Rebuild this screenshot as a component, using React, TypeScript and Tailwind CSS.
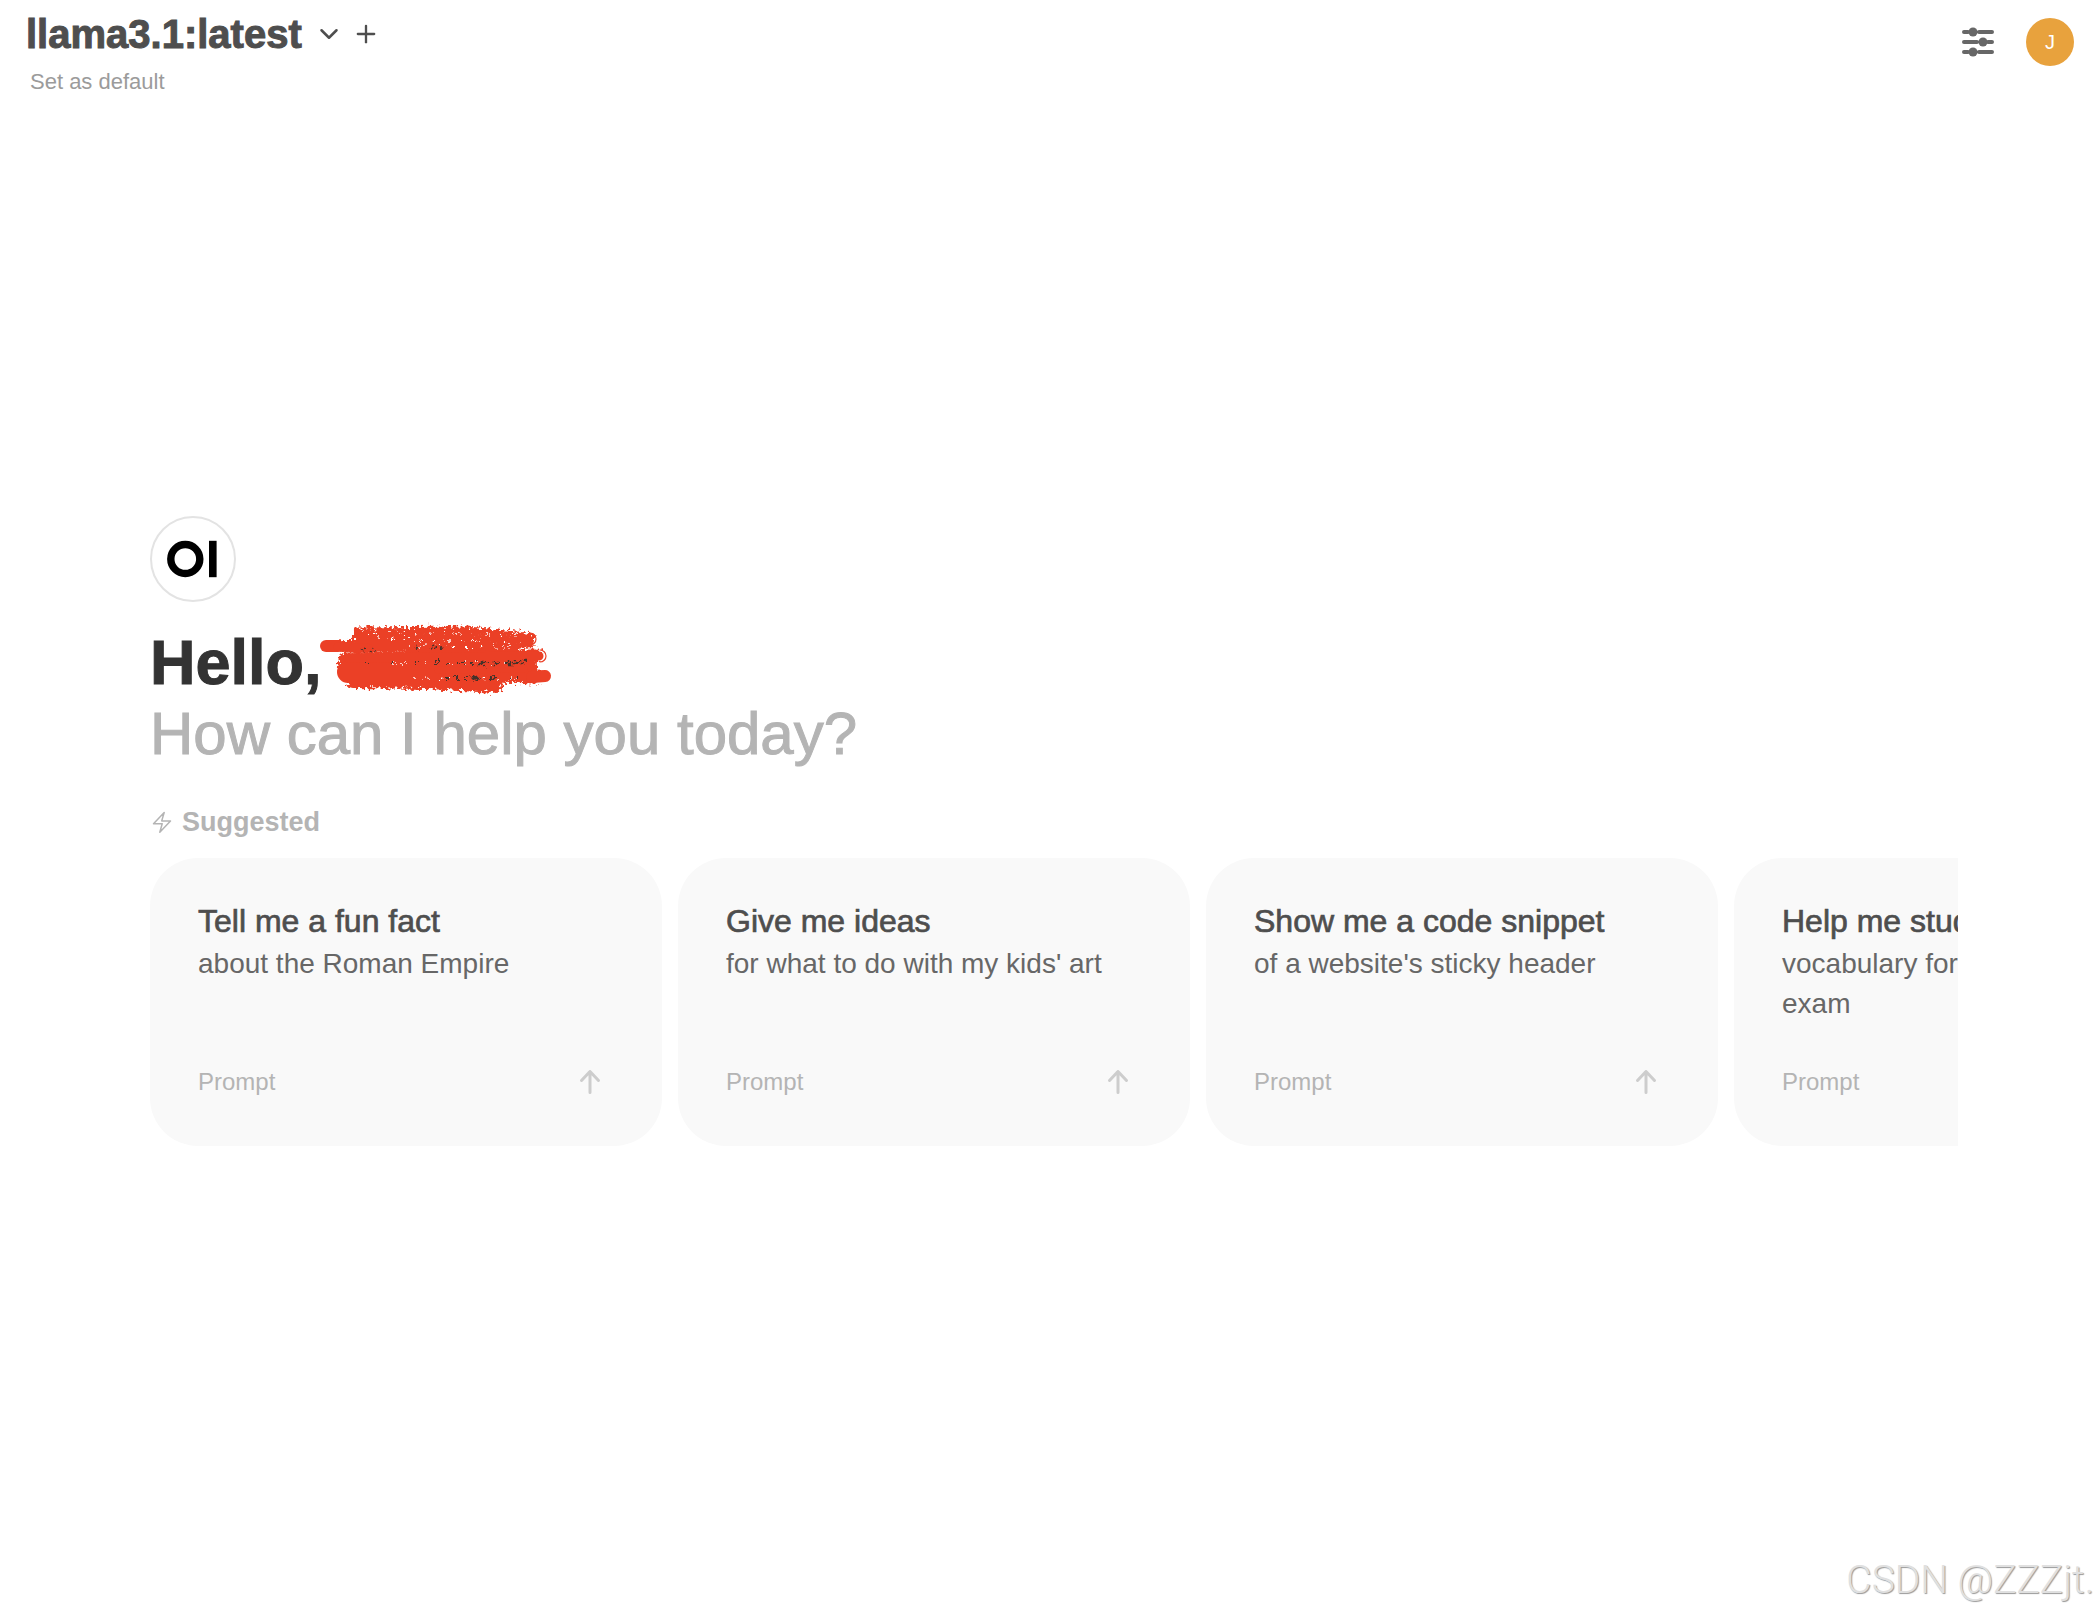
import { ChevronDown, Plus } from "lucide-react";

interface Suggestion {
  title: string;
  description: string;
}

const suggestions: Suggestion[] = [
  { title: "Tell me a fun fact", description: "about the Roman Empire" },
  { title: "Give me ideas", description: "for what to do with my kids' art" },
  { title: "Show me a code snippet", description: "of a website's sticky header" },
  { title: "Help me study", description: "vocabulary for a college entrance exam" },
];

function ControlsIcon() {
  return (
    <svg width="32" height="32" viewBox="0 0 32 32" fill="none" stroke="currentColor" strokeWidth="4" strokeLinecap="round">
      <path d="M2 6h4M17 6h13M2 16h13M26 16h4M2 26h4M17 26h13" />
      <path d="M6 6h11M15 16h11M6 26h11" strokeWidth="2" />
      <g fill="currentColor" stroke="none">
        <circle cx="11" cy="6" r="4.5" />
        <circle cx="21" cy="16" r="4.5" />
        <circle cx="11" cy="26" r="4.5" />
      </g>
    </svg>
  );
}

function Logo() {
  return (
    <div className="h-[86px] w-[86px] rounded-full border-2 border-[#e3e3e3] bg-white">
      <svg width="82" height="82" viewBox="0 0 82 82">
        <circle cx="33.3" cy="41" r="14.5" fill="none" stroke="#000" strokeWidth="7.4" />
        <rect x="57" y="22.8" width="7.6" height="36.4" fill="#000" />
      </svg>
    </div>
  );
}

// Crayon strokes that hide the user's name
function Scribble() {
  return (
    <svg width="234" height="72" viewBox="4 1 234 72" className="block overflow-visible">
      <defs>
        <filter id="crayon" filterUnits="userSpaceOnUse" x="-10" y="-15" width="260" height="105">
          <feTurbulence type="fractalNoise" baseFrequency="0.3" numOctaves="2" seed="4" result="noise" />
          <feDisplacementMap in="SourceGraphic" in2="noise" scale="11" xChannelSelector="R" yChannelSelector="G" />
        </filter>
      </defs>
      <g fill="none" stroke="#eb4026" strokeLinecap="round" strokeLinejoin="round">
        <g filter="url(#crayon)">
          <path d="M36 10 L150 9 L216 16" strokeWidth="15" strokeLinecap="butt" />
          <path d="M25 21 L120 20 L198 20" strokeWidth="12" />
          <path d="M27 34 L120 32 L218 31" strokeWidth="13" />
          <path d="M27 42 L120 43 L212 43" strokeWidth="15" />
          <path d="M32 52 L120 50 L220 52" strokeWidth="13" />
          <path d="M36 57 L110 58 L178 62" strokeWidth="12" />
        </g>
        <path d="M8 21 L20 21" strokeWidth="12" />
        <path d="M20 22 L50 23" strokeWidth="9" />
        <path d="M30 47 L110 47" strokeWidth="22" />
        <path d="M30 33 L221 31" strokeWidth="9" />
        <path d="M120 45 L206 44" strokeWidth="7" />
        <path d="M214 52 L227 51" strokeWidth="12" />
        <path d="M222 25a6 6 0 0 1 0 12" strokeWidth="1.2" />
        <path d="M212 8a6 6 0 0 1 0 12" strokeWidth="1.2" />
      </g>
      <g filter="url(#crayon)" fill="none" stroke="#fff" strokeWidth="1.3" strokeDasharray="2 7 1 4 3 11">
        <path d="M42 6 L204 11" />
        <path d="M60 14 L205 18" />
        <path d="M92 21 L198 22" />
        <path d="M75 38 L207 38" />
        <path d="M95 53 L200 54" />
      </g>
      <g filter="url(#crayon)" fill="none" stroke="#453029" strokeWidth="1.8">
        <path d="M44 24 L58 27" strokeDasharray="3 6" />
        <path d="M98 22 L104 25" strokeDasharray="3 4" />
        <path d="M114 21 L128 24" strokeDasharray="4 4" />
        <path d="M50 38 L112 38" strokeDasharray="2 22" />
        <path d="M116 38 L156 38" strokeDasharray="7 5 3 9" />
        <path d="M160 38 L208 38" strokeDasharray="8 6 6 8 11 3" strokeWidth="2.4" />
        <path d="M128 53 L150 53" strokeDasharray="3 6" />
        <path d="M154 53 L186 54" strokeDasharray="7 11" strokeWidth="3" />
        <path d="M192 52 L206 52" strokeDasharray="2 5" />
      </g>
    </svg>
  );
}

function BoltIcon() {
  return (
    <svg width="24" height="24" viewBox="0 0 24 24" fill="none" stroke="currentColor" strokeWidth="1.5" strokeLinecap="round" strokeLinejoin="round">
      <path d="M3.5 13.8 14.2 2.5l-2.5 8.4h8.8L9.8 22.3l2.4-8.5z" />
    </svg>
  );
}

function ArrowUpIcon() {
  return (
    <svg width="32" height="32" viewBox="0 0 32 32" fill="none" stroke="currentColor" strokeWidth="3" strokeLinecap="round" strokeLinejoin="round">
      <path d="M16 26.5V5.5M7.5 14.5 16 5.5l8.5 9" />
    </svg>
  );
}

function SuggestionCard({ title, description }: Suggestion) {
  return (
    <button
      type="button"
      className="flex h-72 w-[512px] shrink-0 flex-col justify-between rounded-[48px] bg-[#f9f9f9] px-12 py-10 text-left"
    >
      <span className="flex flex-col">
        <span className="text-[32px] leading-[46px] text-[#4e4e4e] [-webkit-text-stroke:0.7px]">{title}</span>
        <span className="text-[28px] leading-10 text-[#676767]">{description}</span>
      </span>
      <span className="flex w-full items-center justify-between">
        <span className="text-2xl text-[#b4b4b4]">Prompt</span>
        <span className="p-2 text-[#cdcdcd]">
          <ArrowUpIcon />
        </span>
      </span>
    </button>
  );
}

export default function App() {
  return (
    <div className="relative flex min-h-screen flex-col bg-white font-['Liberation_Sans',Arial,sans-serif]">
      {/* Navbar */}
      <header className="flex h-24 items-start justify-between pl-[26px] pr-6">
        <div>
          <div className="flex h-[68px] items-center">
            <button type="button" className="flex items-center gap-3 text-[#4e4e4e]">
              <span className="text-[40px] leading-[48px] font-bold [-webkit-text-stroke:1px]">llama3.1:latest</span>
              <ChevronDown size={30} strokeWidth={2} />
            </button>
            <button type="button" aria-label="Add model" className="ml-2 text-[#4e4e4e]">
              <Plus size={28} strokeWidth={2} />
            </button>
          </div>
          <button type="button" className="block pl-1 text-[22px] leading-7 text-[#9b9b9b]">
            Set as default
          </button>
        </div>
        <div className="flex items-center gap-8 pt-[18px]">
          <button type="button" aria-label="Controls" className="text-[#676767]">
            <ControlsIcon />
          </button>
          <button
            type="button"
            aria-label="User menu"
            className="flex h-12 w-12 items-center justify-center rounded-full bg-[#e8a23d] text-xl text-white"
          >
            J
          </button>
        </div>
      </header>

      {/* Placeholder */}
      <main className="flex flex-1 flex-col justify-center pb-12 pl-[150px] pr-[140px]">
        <Logo />
        <div className="mt-6 flex items-center">
          <h1 className="text-[63px] leading-[72px] font-bold text-[#333333] [-webkit-text-stroke:1px]">Hello,</h1>
          <Scribble />
        </div>
        <p className="text-[60px] leading-[72px] text-[#b4b4b4] [-webkit-text-stroke:1px]">How can I help you today?</p>

        <div className="mt-8 flex items-center gap-2 text-[#b4b4b4]">
          <BoltIcon />
          <h2 className="text-[27px] leading-10 font-bold">Suggested</h2>
        </div>
        <div className="mt-4 flex gap-4 overflow-x-auto [scrollbar-width:none]">
          {suggestions.map((suggestion) => (
            <SuggestionCard key={suggestion.title} {...suggestion} />
          ))}
        </div>
      </main>

      <div className="absolute right-1 bottom-2.5 font-['Roboto',sans-serif] text-[39px] leading-[48px] font-light text-[#e0e0e0] [text-shadow:1px_1px_1px_#999]">
        CSDN @ZZZjt.
      </div>
    </div>
  );
}
